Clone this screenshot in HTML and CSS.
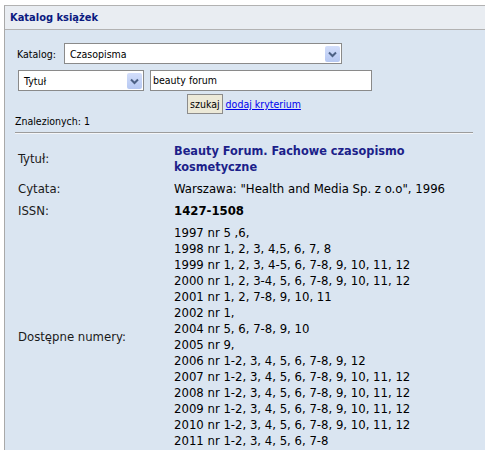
FILE: index.html
```html
<!DOCTYPE html>
<html lang="pl">
<head>
<meta charset="utf-8">
<title>Katalog książek</title>
<link rel="stylesheet" href="styles.css">
</head>
<body>
<div class="panel">
  <div class="head">Katalog książek</div>
  <div class="content">
    <div class="row1">
      <span class="lbl">Katalog:</span>
      <div class="select wide"><span class="sel-text">Czasopisma</span><span class="arrow"><svg width="15" height="16" viewBox="0 0 15 16"><path d="M4 6.5 L7.5 10 L11 6.5" fill="none" stroke="#4d6185" stroke-width="2"/></svg></span></div>
    </div>
    <div class="row2">
      <div class="select narrow"><span class="sel-text">Tytuł</span><span class="arrow"><svg width="15" height="16" viewBox="0 0 15 16"><path d="M4 6.5 L7.5 10 L11 6.5" fill="none" stroke="#4d6185" stroke-width="2"/></svg></span></div>
      <div class="input">beauty forum</div>
    </div>
    <div class="row3"><button class="btn">szukaj</button> <a class="link" href="#">dodaj kryterium</a></div>
    <div class="found">Znalezionych: 1</div>
    <div class="hr"></div>
    <div class="details">
      <div class="dl">Tytuł:</div>
      <div class="dv title">Beauty Forum. Fachowe czasopismo kosmetyczne</div>
      <div class="dl">Cytata:</div>
      <div class="dv">Warszawa: "Health and Media Sp. z o.o", 1996</div>
      <div class="dl">ISSN:</div>
      <div class="dv bold">1427-1508</div>
      <div class="dl">Dostępne numery:</div>
      <div class="dv list">
        <div>1997 nr 5 ,6,</div>
        <div>1998 nr 1, 2, 3, 4,5, 6, 7, 8</div>
        <div>1999 nr 1, 2, 3, 4-5, 6, 7-8, 9, 10, 11, 12</div>
        <div>2000 nr 1, 2, 3-4, 5, 6, 7-8, 9, 10, 11, 12</div>
        <div>2001 nr 1, 2, 7-8, 9, 10, 11</div>
        <div>2002 nr 1,</div>
        <div>2004 nr 5, 6, 7-8, 9, 10</div>
        <div>2005 nr 9,</div>
        <div>2006 nr 1-2, 3, 4, 5, 6, 7-8, 9, 12</div>
        <div>2007 nr 1-2, 3, 4, 5, 6, 7-8, 9, 10, 11, 12</div>
        <div>2008 nr 1-2, 3, 4, 5, 6, 7-8, 9, 10, 11, 12</div>
        <div>2009 nr 1-2, 3, 4, 5, 6, 7-8, 9, 10, 11, 12</div>
        <div>2010 nr 1-2, 3, 4, 5, 6, 7-8, 9, 10, 11, 12</div>
        <div>2011 nr 1-2, 3, 4, 5, 6, 7-8</div>
      </div>
    </div>
  </div>
</div>
</body>
</html>
```
FILE: styles.css
```css
html, body {
  margin: 0;
  padding: 0;
  background: #ffffff;
}
body {
  font-family: "DejaVu Sans Condensed", "DejaVu Sans", sans-serif;
  font-stretch: semi-condensed;
  font-size: 10.5px;
  color: #000;
  overflow: hidden;
}
.panel {
  box-sizing: border-box;
  margin: 5px 0 0 4px;
  height: 445px;
  border-top: 1px solid #b2b2b2;
  border-left: 1px solid #a9a9a9;
  background: #dae5f1;
}
.head {
  height: 23px;
  line-height: 23px;
  padding-left: 5px;
  background: #e9edf2;
  border-bottom: 1px solid #b2b2b2;
  font-weight: bold;
  font-size: 11px;
  color: #0b1a80;
}
.content {
  padding: 13px 12px 0 10px;
}
.row1 {
  display: flex;
  align-items: center;
  margin-left: 2px;
  height: 21px;
}
.lbl {
  width: 47px;
}
.select {
  box-sizing: border-box;
  height: 21px;
  border: 1px solid #8a8a8a;
  background: #fff;
  display: flex;
  align-items: center;
  justify-content: space-between;
  padding: 0 1px 0 5px;
}
.wide { width: 278px; }
.narrow { width: 126px; }
.arrow {
  display: block;
  width: 15px;
  height: 16px;
  border-radius: 2px;
  background: linear-gradient(#d3defb, #b6c8f2);
}
.arrow svg { display: block; }
.row2 {
  display: flex;
  gap: 6px;
  margin: 6px 0 0 3px;
}
.input {
  box-sizing: border-box;
  width: 222px;
  height: 21px;
  line-height: 19px;
  border: 1px solid #8a8a8a;
  background: #fff;
  padding-left: 2px;
}
.row3 {
  text-align: center;
  margin-top: 3px;
  height: 20px;
}
.btn {
  box-sizing: border-box;
  height: 20px;
  padding: 0 2px;
  margin: 0;
  border: 1px solid #8c8c8c;
  background: #ece9d8;
  font: inherit;
  color: #000;
  vertical-align: top;
}
.link {
  color: #0000ee;
  text-decoration: underline;
  line-height: 20px;
}
.found {
  line-height: 14px;
}
.hr {
  margin-top: 4px;
  height: 1px;
  background: #9c9c9c;
  border-bottom: 1px solid #f4f6f9;
}
.details {
  display: grid;
  grid-template-columns: 156px 1fr;
  margin: 6px 0 0 3px;
  font-size: 13px;
  color: #1a1a1a;
}
.dl, .dv {
  display: flex;
  align-items: center;
  padding: 3px 0;
  line-height: 16px;
}
.dv { display: block; color: #000; }
.dl { align-self: stretch; }
.title {
  font-weight: bold;
  font-size: 12.6px;
  color: #1c1f8a;
}
.bold {
  font-weight: bold;
  font-size: 13px;
}
.list div { line-height: 16px; }
```
